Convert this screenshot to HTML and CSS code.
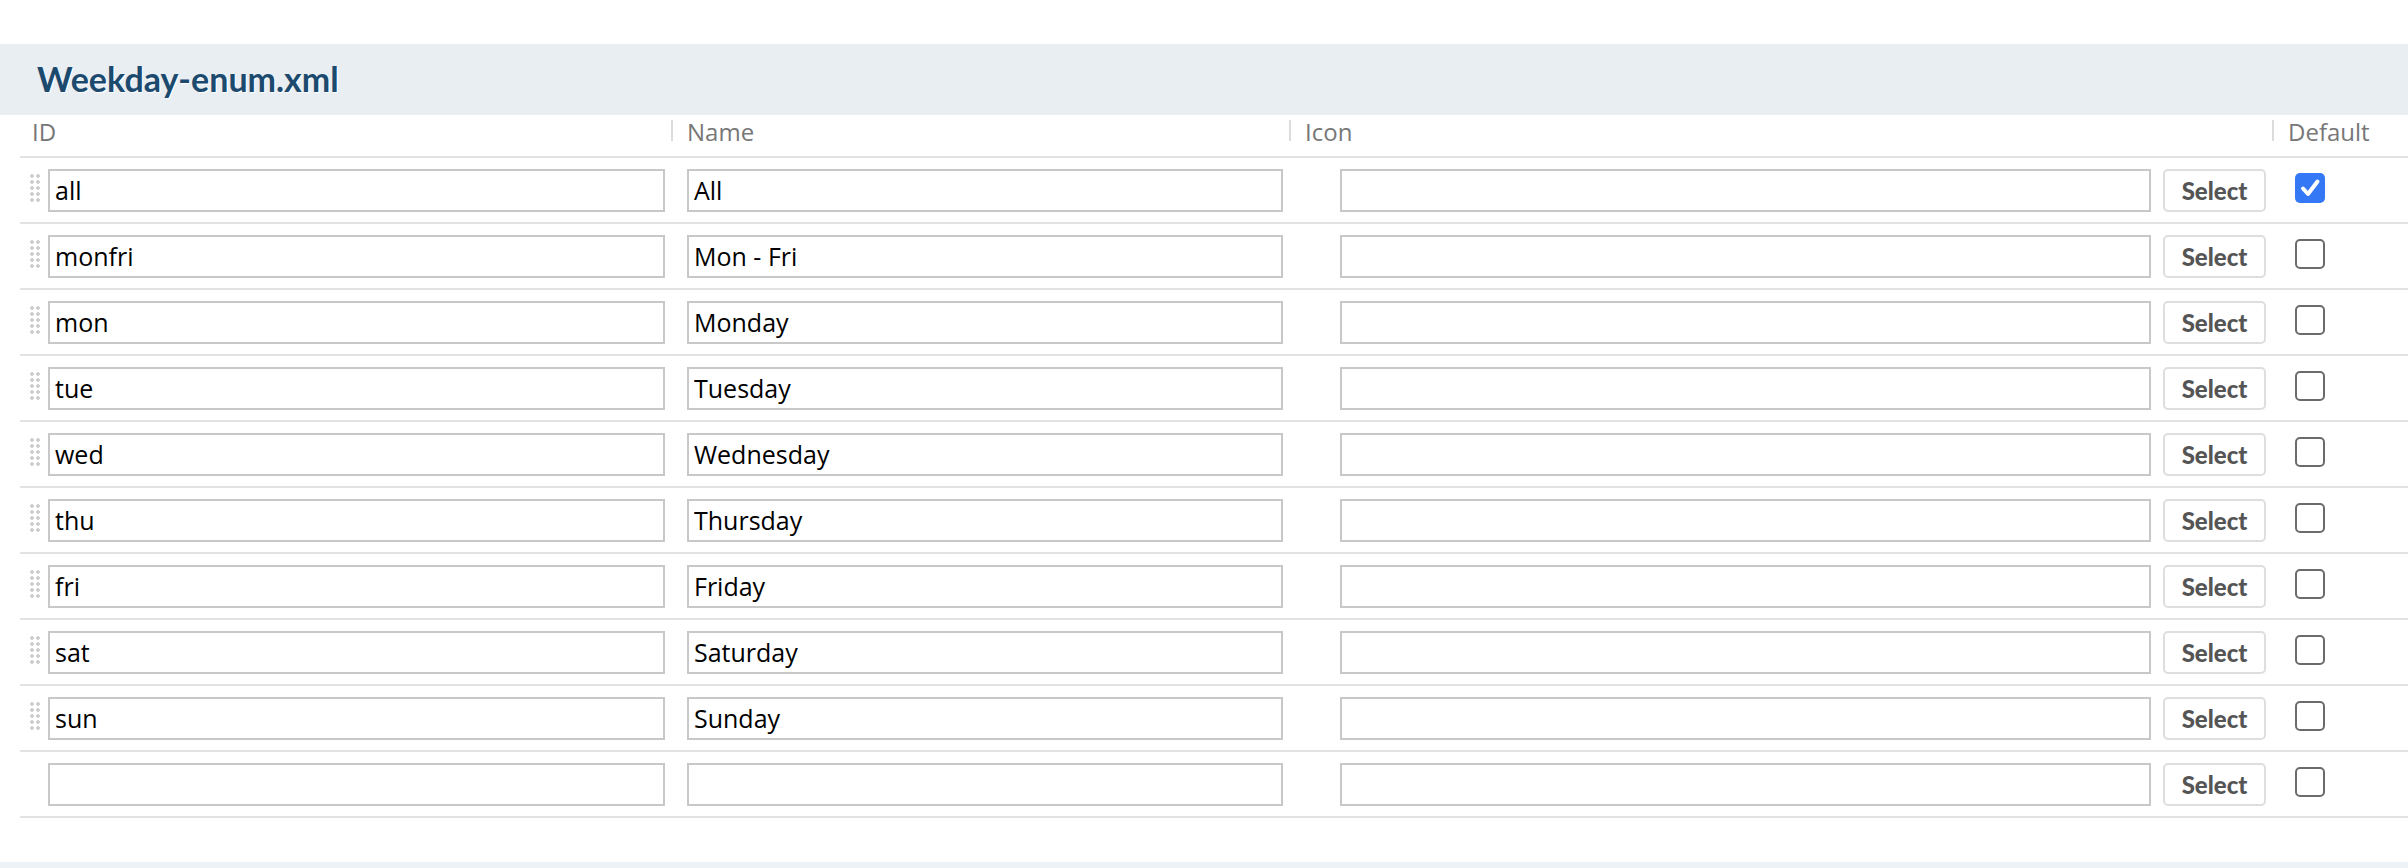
FILE: index.html
```html
<html><head>
  <title>Weekday-enum.xml</title>
  <link rel="stylesheet" href="styles.css">
</head>
<body>
<div class="topSpace"></div>

<div class="fileHeader">
  <h2 class="fileTitle">Weekday-enum.xml</h2>
</div>

<div class="enumTable">
  <div class="row headRow">
    <div class="th first">ID</div>
    <div class="th"><span class="sep"></span>Name</div>
    <div class="th"><span class="sep"></span>Icon</div>
    <div class="th"><span class="sep"></span>Default</div>
  </div>

  <div class="row">
    <div class="cell idCell"><span class="grip"></span><input type="text" value="all"></div>
    <div class="cell nameCell"><input type="text" value="All"></div>
    <div class="cell iconCell"><input type="text" value=""><button>Select</button></div>
    <div class="cell defCell"><span class="check checked"><svg width="30" height="30" viewBox="0 0 30 30"><path d="M8 15.5 L13 21 L22.5 8.5" fill="none" stroke="#fff" stroke-width="4" stroke-linecap="round" stroke-linejoin="round"/></svg></span></div>
  </div>

  <div class="row">
    <div class="cell idCell"><span class="grip"></span><input type="text" value="monfri"></div>
    <div class="cell nameCell"><input type="text" value="Mon - Fri"></div>
    <div class="cell iconCell"><input type="text" value=""><button>Select</button></div>
    <div class="cell defCell"><span class="check"></span></div>
  </div>

  <div class="row">
    <div class="cell idCell"><span class="grip"></span><input type="text" value="mon"></div>
    <div class="cell nameCell"><input type="text" value="Monday"></div>
    <div class="cell iconCell"><input type="text" value=""><button>Select</button></div>
    <div class="cell defCell"><span class="check"></span></div>
  </div>

  <div class="row">
    <div class="cell idCell"><span class="grip"></span><input type="text" value="tue"></div>
    <div class="cell nameCell"><input type="text" value="Tuesday"></div>
    <div class="cell iconCell"><input type="text" value=""><button>Select</button></div>
    <div class="cell defCell"><span class="check"></span></div>
  </div>

  <div class="row">
    <div class="cell idCell"><span class="grip"></span><input type="text" value="wed"></div>
    <div class="cell nameCell"><input type="text" value="Wednesday"></div>
    <div class="cell iconCell"><input type="text" value=""><button>Select</button></div>
    <div class="cell defCell"><span class="check"></span></div>
  </div>

  <div class="row">
    <div class="cell idCell"><span class="grip"></span><input type="text" value="thu"></div>
    <div class="cell nameCell"><input type="text" value="Thursday"></div>
    <div class="cell iconCell"><input type="text" value=""><button>Select</button></div>
    <div class="cell defCell"><span class="check"></span></div>
  </div>

  <div class="row">
    <div class="cell idCell"><span class="grip"></span><input type="text" value="fri"></div>
    <div class="cell nameCell"><input type="text" value="Friday"></div>
    <div class="cell iconCell"><input type="text" value=""><button>Select</button></div>
    <div class="cell defCell"><span class="check"></span></div>
  </div>

  <div class="row">
    <div class="cell idCell"><span class="grip"></span><input type="text" value="sat"></div>
    <div class="cell nameCell"><input type="text" value="Saturday"></div>
    <div class="cell iconCell"><input type="text" value=""><button>Select</button></div>
    <div class="cell defCell"><span class="check"></span></div>
  </div>

  <div class="row">
    <div class="cell idCell"><span class="grip"></span><input type="text" value="sun"></div>
    <div class="cell nameCell"><input type="text" value="Sunday"></div>
    <div class="cell iconCell"><input type="text" value=""><button>Select</button></div>
    <div class="cell defCell"><span class="check"></span></div>
  </div>

  <!-- riga vuota per nuovo valore -->
  <div class="row">
    <div class="cell idCell"><span class="grip empty"></span><input type="text" value=""></div>
    <div class="cell nameCell"><input type="text" value=""></div>
    <div class="cell iconCell"><input type="text" value=""><button>Select</button></div>
    <div class="cell defCell"><span class="check"></span></div>
  </div>
</div>

<div class="nextSection"></div>
</body></html>
```

FILE: styles.css
```css
body {
  margin: 0;
  background-color: #fff;
  font-family: "Open Sans", "Liberation Sans", sans-serif;
}

.topSpace {
  height: 44px;
}

.fileHeader {
  background-color: #e9eef2;
  height: 71px;
  box-sizing: border-box;
  padding: 14px 37px 0 37px;
}

.fileTitle {
  margin: 0;
  font-family: Lato, "Open Sans", sans-serif;
  font-size: 34px;
  font-weight: bold;
  line-height: 41px;
  color: #1c4a6f;
  text-shadow: 1px 1px 0 #fff;
}

.enumTable {
  margin-left: 20px;
}

.row {
  display: grid;
  grid-template-columns: 651px 618px 983px 1fr;
  height: 66px;
  box-sizing: border-box;
  border-bottom: 2px solid #e2e2e2;
}

.headRow {
  height: 43px;
}

.th {
  display: flex;
  align-items: flex-start;
  padding-top: 1px;
  font-size: 24px;
  line-height: 32px;
  color: #777;
}

.th.first {
  padding-left: 12px;
}

.th .sep {
  width: 2px;
  height: 21px;
  margin-top: 4px;
  margin-right: 14px;
  background-color: #dcdcdc;
}

.cell {
  display: flex;
  align-items: center;
}

.cell input[type=text] {
  flex: 1;
  min-width: 0;
  height: 43px;
  box-sizing: border-box;
  border: 2px solid #c8c8c8;
  border-radius: 0;
  padding: 0 5px;
  margin: 0;
  font-family: "Open Sans", "Liberation Sans", sans-serif;
  font-size: 25px;
  color: #000;
  background-color: #fff;
  outline: none;
}

.idCell {
  padding: 0 6px 0 10px;
}

.grip {
  width: 10px;
  height: 28px;
  margin-right: 8px;
  margin-top: -4px;
  background-image: radial-gradient(circle, #cfcfcf 1.6px, transparent 1.9px);
  background-size: 6px 6px;
  background-position: -1px -1px;
}

.grip.empty {
  visibility: hidden;
}

.nameCell {
  padding: 0 6px 0 16px;
}

.iconCell {
  padding: 0 6px 0 51px;
}

.iconCell button {
  width: 103px;
  height: 43px;
  margin-left: 12px;
  box-sizing: border-box;
  background-color: #fff;
  border: 2px solid #dedede;
  border-radius: 5px;
  font-family: Lato, "Open Sans", sans-serif;
  font-size: 24px;
  font-weight: 900;
  color: #555;
  cursor: pointer;
  padding: 0;
}

.defCell {
  padding-left: 23px;
}

.check {
  display: block;
  width: 30px;
  height: 30px;
  margin-top: -4px;
  box-sizing: border-box;
  border: 2px solid #6b6b6b;
  border-radius: 5px;
  background-color: #fff;
}

.check.checked {
  border: none;
  background-color: #3478f6;
}

.check svg {
  display: block;
}

.nextSection {
  margin-top: 44px;
  height: 10px;
  background-color: #edf2f6;
}
```
